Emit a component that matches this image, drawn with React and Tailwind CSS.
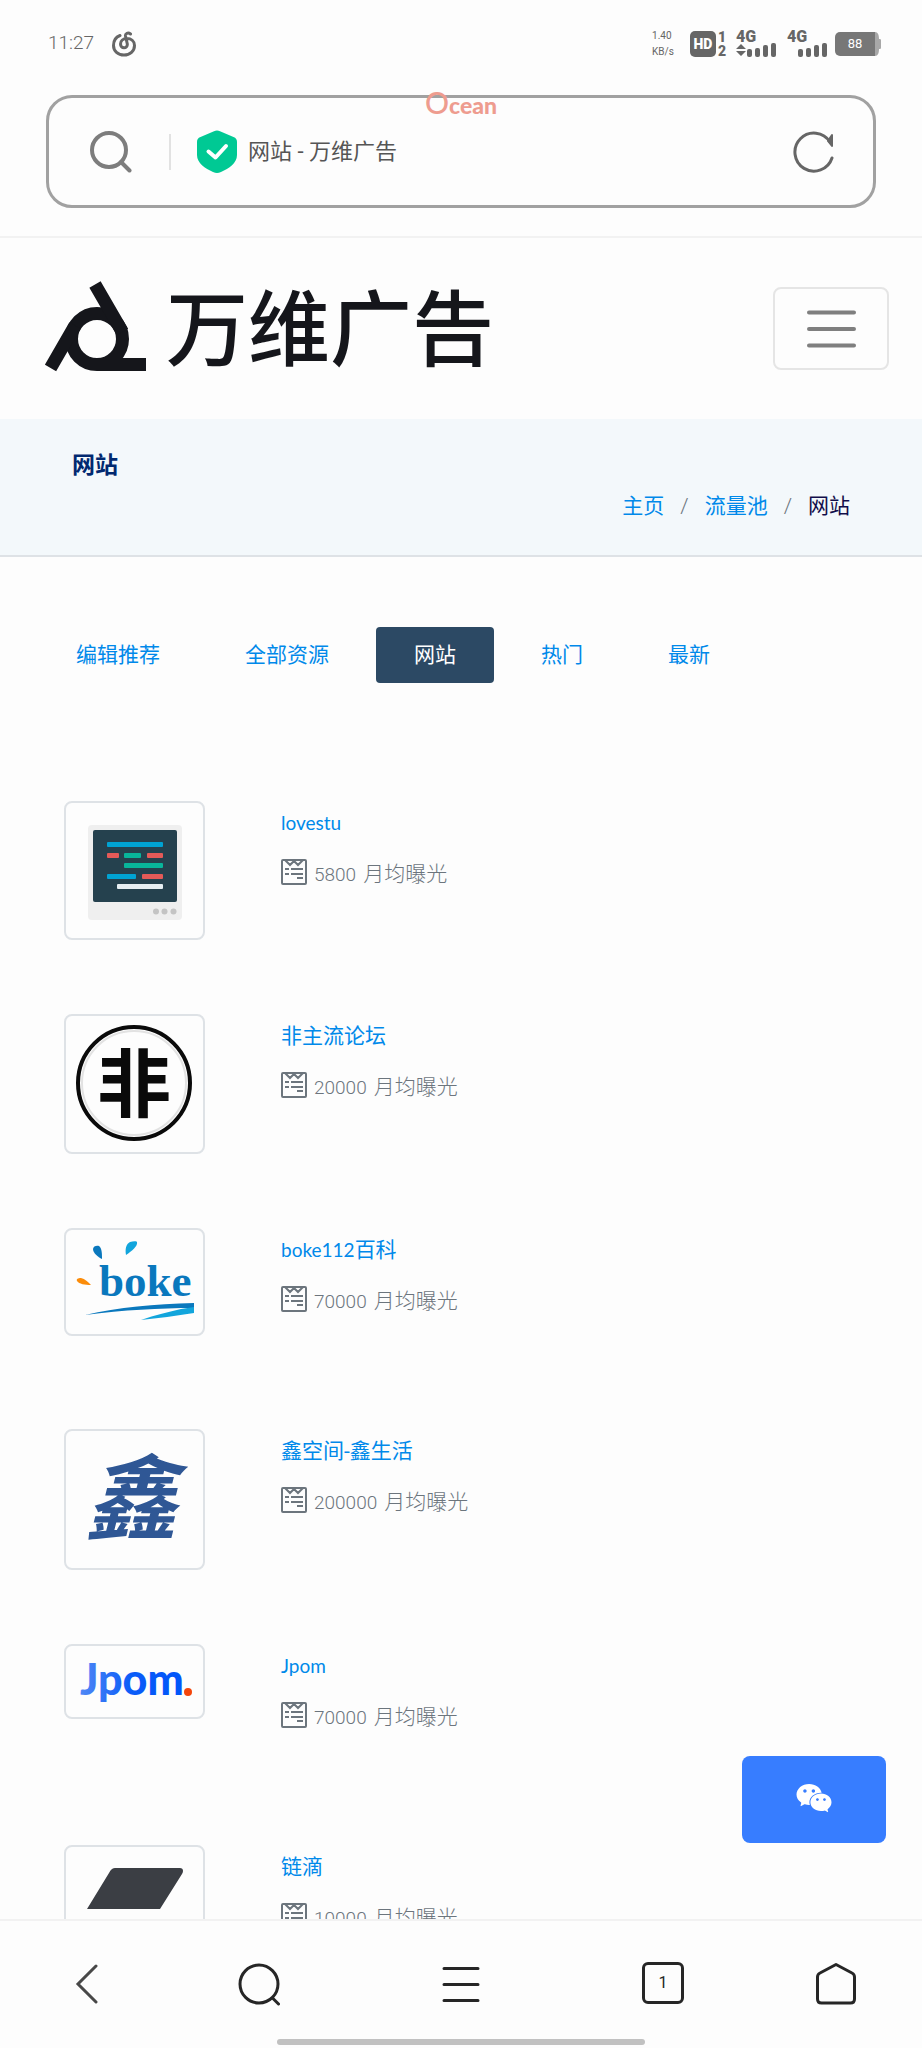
import React from 'react';
import { AiFillWechat } from 'react-icons/ai';

const tabs = ['编辑推荐', '全部资源', '网站', '热门', '最新'];

const MonitorLogo = () => (
  <svg viewBox="2 2 137 135" className="block w-full" aria-hidden="true">
    <rect x="24" y="24" width="94" height="95" rx="4" fill="#efefef" />
    <rect x="29" y="29" width="84" height="72" rx="2" fill="#25414e" />
    <g fill="#00a3d3">
      <rect x="43" y="41" width="56" height="5" rx="1" />
      <rect x="43" y="73" width="29" height="5" rx="1" />
    </g>
    <g fill="#e45a58">
      <rect x="43" y="52" width="12" height="5" rx="1" />
      <rect x="83" y="52" width="16" height="5" rx="1" />
      <rect x="78" y="73" width="21" height="5" rx="1" />
    </g>
    <g fill="#08b59b">
      <rect x="60" y="52" width="17" height="5" rx="1" />
      <rect x="60" y="62" width="39" height="5" rx="1" />
    </g>
    <rect x="53" y="83" width="46" height="5" rx="1" fill="#e6eef2" />
    <g fill="#c4c4c4">
      <circle cx="92" cy="110.500" r="3" />
      <circle cx="100.500" cy="110.500" r="3" />
      <circle cx="109.500" cy="110.500" r="3" />
    </g>
  </svg>
);

const ForumLogo = () => (
  <svg viewBox="2 2 137 136" className="block w-full" role="img">
    <circle cx="70" cy="69" r="56" fill="none" stroke="#0a0a0a" strokeWidth="4" />
    <circle cx="70" cy="69" r="52" fill="none" stroke="#e2e2e2" strokeWidth="2" />
    <text x="70" y="97" textAnchor="middle" className="font-['Noto_Sans_CJK_SC',sans-serif] text-[74px] font-bold" fill="#0a0a0a">非</text>
  </svg>
);

const BokeLogo = () => (
  <svg viewBox="2 2 137 104" className="block w-full" role="img">
    <path d="M38 31C34 29 29 25 29 21c0-3 4-4 6-3 3 2 3 8 3 13z" fill="#0a78bd" />
    <path d="M62 27c-1-6 0-11 4-13 3-1 7-1 7 0 1 4-5 9-11 13z" fill="#12a5dc" />
    <path d="M27 57c-6 0-12-1-14-4-1-2 1-3 4-3 4 1 7 4 10 7z" fill="#fb8c0a" />
    <text x="35" y="68" className="font-['Liberation_Serif',serif] text-[45px] font-bold" fill="#0a78bd">boke</text>
    <path d="M21 87C55 79 90 76 130 75v5C95 80 60 82 21 87z" fill="#0a78bd" />
    <path d="M130 79v6c-18 3-36 5-53 7 14-5 28-8 40-11z" fill="#12a5dc" />
  </svg>
);

const XinLogo = () => (
  <svg viewBox="2 2 137 137" className="block w-full overflow-visible" role="img">
    <text x="21" y="103" className="font-['Noto_Sans_CJK_SC',sans-serif] text-[92px] font-bold italic" fill="#2f5795">鑫</text>
  </svg>
);

const JpomLogo = () => (
  <svg viewBox="2 2 137 71" className="block w-full" role="img">
    <defs>
      <linearGradient id="jpom" x1="0" x2="1">
        <stop offset="0" stopColor="#5088f5" />
        <stop offset="0.5" stopColor="#0a5cf8" />
        <stop offset="1" stopColor="#0055fa" />
      </linearGradient>
    </defs>
    <text x="16" y="51" className="font-['Lato',sans-serif] text-[43px] font-black" fill="url(#jpom)">Jpom</text>
    <circle cx="124" cy="48" r="4" fill="#f4460c" />
  </svg>
);

const SlantLogo = () => (
  <svg viewBox="2 2 137 137" className="block w-full" aria-hidden="true">
    <path d="M51 23h65c3 0 4 3 2 6L96 64H23l22-36c2-4 4-5 6-5z" fill="#3b3e44" />
    <path d="M45 74h73L96 110c-2 4-4 5-6 5H26c-3 0-4-3-2-6z" fill="#d23f31" />
  </svg>
);

// latin is the leading part of the name, set in the smaller Latin face
const sites = [
  { id: 1, latin: 'lovestu', name: '', views: '5800', Logo: MonitorLogo },
  { id: 2, latin: '', name: '非主流论坛', views: '20000', Logo: ForumLogo },
  { id: 3, latin: 'boke112', name: '百科', views: '70000', Logo: BokeLogo },
  { id: 4, latin: '', name: '鑫空间-鑫生活', views: '200000', Logo: XinLogo },
  { id: 5, latin: 'Jpom', name: '', views: '70000', Logo: JpomLogo },
  { id: 6, latin: '', name: '链滴', views: '10000', Logo: SlantLogo }
];

const ReportIcon = () => (
  <svg width="26" height="26" viewBox="0 0 26 26" fill="none" stroke="currentColor" strokeWidth="2" aria-hidden="true">
    <rect x="1" y="1" width="24" height="24" rx="1" />
    <path d="M4 1l5 5 4-4 4 4 5-5" />
    <path d="M4 10h4M10 10h12M4 15h4M10 15h12M16 19h6" />
  </svg>
);

const MusicIcon = () => (
  <svg width="24" height="26" viewBox="0 0 24 26" fill="none" stroke="currentColor" strokeWidth="3" strokeLinecap="round" className="ml-[18px]" aria-hidden="true">
    <path d="M8 4.500C4 6 1.500 10 1.500 14.500c0 5.500 4.500 9.500 10.500 9.500s10.500-4 10.500-9.500C22.500 10 19 7.500 15 7.500c-4 0-6.500 2.500-6.500 5.500 0 2.200 1.500 3.800 3.500 3.800s3.500-1.600 3.300-3.800L13.500 5c-.4-2.500 2.500-4 5-2" />
  </svg>
);

const Signal = ({ arrows }) => (
  <div className="w-[42px] font-['Roboto',sans-serif] text-[#666]">
    <div className="text-[16px] leading-3 font-black">4G</div>
    <svg width="42" height="14" viewBox="0 0 42 14" fill="currentColor" className="block" aria-hidden="true">
      {arrows && <path d="M0 6l5-5 5 5zM0 8l5 5 5-5z" />}
      <rect x="11" y="6" width="5" height="8" rx="2" />
      <rect x="19" y="5" width="5" height="9" rx="2" />
      <rect x="27" y="2" width="5" height="12" rx="2" />
      <rect x="35" y="0" width="5" height="14" rx="2" />
    </svg>
  </div>
);

const StatusBar = () => (
  <div className="flex h-[87px] items-center pl-12 pr-[41px] text-[#666]">
    <span className="text-[19px] font-light">11:27</span>
    <MusicIcon />
    <div className="ml-auto flex items-center">
      <div className="mr-4 text-[10px] leading-4">
        <div>1.40</div>
        <div>KB/s</div>
      </div>
      <span className="flex h-[26px] w-[26px] items-center justify-center rounded-[5px] bg-[#666] text-[14px] leading-4 font-black text-white">HD</span>
      <div className="mr-[10px] ml-[2px] text-[14px] leading-[14px] font-black">
        <div>1</div>
        <div>2</div>
      </div>
      <Signal arrows />
      <span className="w-[9px]" />
      <Signal />
      <div className="ml-[6px] flex items-center">
        <span className="flex h-6 w-10 items-center justify-center rounded-[5px] rounded-r-none bg-[#777] text-[13px] leading-4 text-white">88</span>
        <svg width="6" height="24" viewBox="0 0 6 24" aria-hidden="true">
          <path d="M0 0c3 0 4 3 4 7h1c1 0 1 1 1 2v6c0 1 0 2-1 2H4c0 4-1 7-4 7z" fill="#a8a8a8" />
        </svg>
      </div>
    </div>
  </div>
);

const AddressBar = () => (
  <div className="relative mx-[46px] mt-2 mb-[28px] flex h-[113px] items-center rounded-[26px] border-3 border-[#a1a1a1] pl-[41px] pr-[38px]">
    <span className="absolute left-[376px] -top-2 flex items-baseline font-['Lato',sans-serif] text-[#ee9c8f]">
      <span className="text-[30px] leading-6 font-medium">O</span>
      <span className="text-[23px] leading-6 font-black">cean</span>
    </span>
    <button aria-label="搜索" className="text-[#7d7d7d]">
      <svg width="42" height="42" viewBox="0 0 42 42" fill="none" stroke="currentColor" strokeWidth="4" strokeLinecap="round">
        <circle cx="19" cy="19" r="17" />
        <path d="M31 31l8.500 8.500" />
      </svg>
    </button>
    <span className="ml-[37px] h-9 w-[2px] bg-[#e2e2e2]" />
    <svg width="40" height="43" viewBox="0 0 40 43" className="ml-[26px] shrink-0" aria-hidden="true">
      <path d="M17 1.200c2-1 4-1 6 0L36.500 7C39 8 40 9.500 40 12v13c0 8-8 13.500-16 17-3 1.300-5 1.300-8 0C8 38.500 0 33 0 25V12c0-2.500 1-4 3.500-5z" fill="#00c994" />
      <path d="M11.500 21.500l7 6L29 16" fill="none" stroke="#fff" strokeWidth="4" strokeLinecap="round" strokeLinejoin="round" />
    </svg>
    <input
      aria-label="地址"
      defaultValue="网站 - 万维广告"
      className="ml-[11px] min-w-0 flex-1 bg-transparent text-[22px] text-[#555] outline-none"
    />
    <button aria-label="刷新" className="text-[#666]">
      <svg width="42" height="42" viewBox="0 0 42 42" fill="none" stroke="currentColor" strokeWidth="3" strokeLinecap="round" strokeLinejoin="round">
        <path d="M39 27A19 19 0 1 1 37 11" />
        <path d="M39 4v11l-4-5z" fill="currentColor" strokeWidth="2" />
      </svg>
    </button>
  </div>
);

const SiteHeader = () => (
  <header className="flex items-end justify-between border-t-2 border-[#f2f2f2] pt-[43px] pr-[33px] pb-[47px] pl-[45px]">
    <a href="#home" className="flex items-end gap-5 text-[#15161b]">
      <svg width="101" height="91" viewBox="0 0 101 91" fill="none" stroke="currentColor" strokeWidth="13" aria-hidden="true">
        <circle cx="52" cy="58" r="25.500" />
        <path d="M50 3.500L77.500 51M5.500 87L30 44.500M52 83.500h49" />
      </svg>
      <span className="text-[82px] leading-[82px] font-medium">万维广告</span>
    </a>
    <button aria-label="菜单" className="mb-[2px] flex h-[83px] w-[116px] items-center justify-center rounded-lg border-2 border-[#e5e5e5]">
      <svg width="49" height="38" viewBox="0 0 49 38" stroke="#7f7f7f" strokeWidth="4" strokeLinecap="round" aria-hidden="true">
        <path d="M2 2.500h45M2 19h45M2 35.500h45" />
      </svg>
    </button>
  </header>
);

const PageTitle = () => (
  <section className="border-b-2 border-[#dee2e6] bg-[#f3f8fb] px-[72px] pt-[29px] pb-[31px]">
    <h1 className="text-[23px] leading-9 font-bold text-[#012970]">网站</h1>
    <nav aria-label="breadcrumb" className="mt-1 flex justify-end gap-4 text-[21px] leading-9 text-[#6c757d]">
      <a href="#home" className="text-[#0089ea]">主页</a>
      <span className="font-light">/</span>
      <a href="#pool" className="text-[#0089ea]">流量池</a>
      <span className="font-light">/</span>
      <span className="text-[#110d4a]">网站</span>
    </nav>
  </section>
);

const TabBar = () => (
  <nav className="mt-[70px] flex gap-[9px] px-[38px] text-[21px]">
    {tabs.map(tab => (
      <a
        key={tab}
        href={`#${tab}`}
        className={`rounded px-[38px] py-3 leading-8 ${tab === '网站' ? 'bg-[#2c4964] text-white' : 'text-[#0089ea]'}`}
      >
        {tab}
      </a>
    ))}
  </nav>
);

const SiteRow = ({ id, latin, name, views, Logo }) => (
  <li className="flex min-h-[201px] items-start gap-[76px] pl-16">
    <div className="mb-[74px] w-[141px] shrink-0 rounded-lg border-2 border-[#dee2e6]">
      <Logo />
    </div>
    <div className="pt-[6px] text-[21px] leading-8">
      <a href={`#site-${id}`} className="block h-8 text-[#0089ea]">
        {latin && <span className="font-['Lato',sans-serif] text-[19px]">{latin}</span>}
        {name}
      </a>
      <p className="mt-[13px] flex items-center gap-[7px] font-light text-[#6c757d]">
        <ReportIcon />
        <span className="pt-[6px]">
          <span className="mr-[2px] text-[19px]">{views}</span> 月均曝光
        </span>
      </p>
    </div>
  </li>
);

const BottomNav = () => (
  <nav className="relative flex h-[129px] shrink-0 items-start border-t-2 border-[#f2f2f2] bg-[#fdfdfd] px-[14px] pt-[41px] text-[#262626]">
    <button aria-label="后退" className="flex flex-5 justify-center">
      <svg width="42" height="42" viewBox="0 0 42 42" fill="none" stroke="#484848" strokeWidth="3" strokeLinecap="round">
        <path d="M31 4L13 22 31 40" />
      </svg>
    </button>
    <button aria-label="搜索" className="flex flex-7 justify-center">
      <svg width="42" height="44" viewBox="0 0 42 44" fill="none" stroke="currentColor" strokeWidth="3" strokeLinecap="round">
        <circle cx="21" cy="22" r="19" />
        <path d="M34.500 36l6 6" />
      </svg>
    </button>
    <button aria-label="菜单" className="flex flex-7 justify-center">
      <svg width="42" height="44" viewBox="0 0 42 44" stroke="currentColor" strokeWidth="3" strokeLinecap="round">
        <path d="M4 6.500h34M4 22.500h34M4 38.500h34" />
      </svg>
    </button>
    <button aria-label="标签页" className="flex flex-7 justify-center">
      <span className="flex size-[42px] items-center justify-center rounded-md border-3 border-current text-[16px]">1</span>
    </button>
    <button aria-label="主页" className="flex flex-5 justify-center">
      <svg width="42" height="44" viewBox="0 0 42 44" fill="none" stroke="currentColor" strokeWidth="3" strokeLinejoin="round">
        <path d="M21 2.500l16 8.500c2 1 2.500 2 2.500 4v22c0 2.500-1.500 4-4 4h-29c-2.500 0-4-1.500-4-4V15c0-2 .5-3 2.500-4z" />
      </svg>
    </button>
    <span className="absolute bottom-[3px] left-[30%] h-[6px] w-[40%] rounded-full bg-[#c1c1c1]" />
  </nav>
);

const App = () => {
  return (
    <div className="relative flex h-screen flex-col bg-[#fdfdfd] font-['Roboto','Noto_Sans_CJK_SC',sans-serif]">
      <StatusBar />
      <AddressBar />
      <main className="min-h-0 flex-1 overflow-y-auto [scrollbar-width:none]">
        <SiteHeader />
        <PageTitle />
        <TabBar />
        <ul className="mt-[118px]">
          {sites.map(site => (
            <SiteRow key={site.id} {...site} />
          ))}
        </ul>
      </main>
      {/* Floating contact button */}
      <button aria-label="微信" className="absolute right-9 bottom-[205px] flex h-[87px] w-36 items-center justify-center rounded-lg bg-[#377dff] pb-1 text-white">
        <AiFillWechat className="size-10" />
      </button>
      <BottomNav />
    </div>
  );
};

export default App;
